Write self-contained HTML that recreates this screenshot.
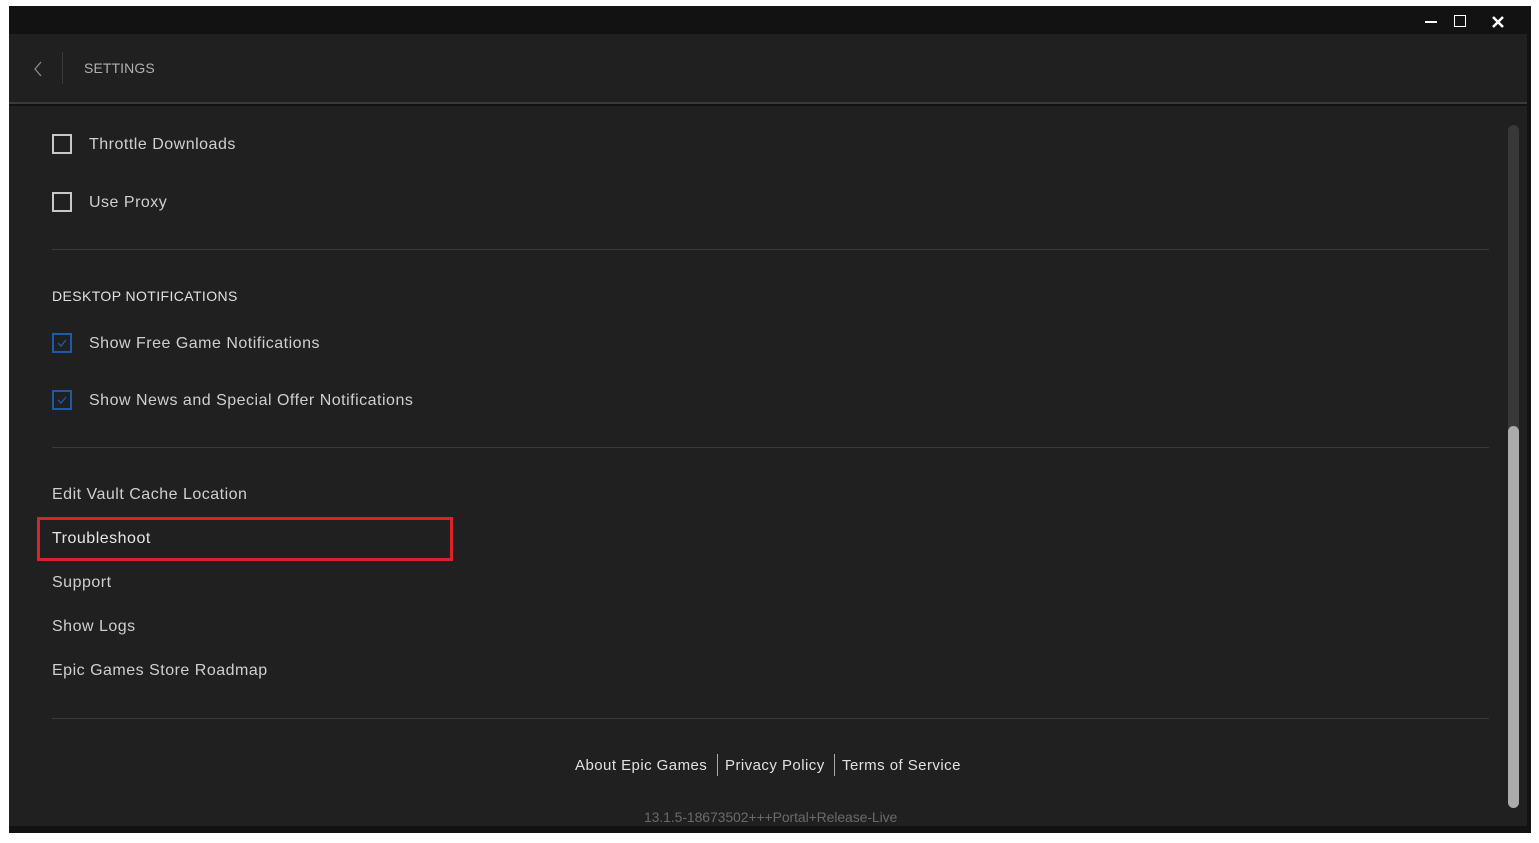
<!DOCTYPE html>
<html><head><meta charset="utf-8"><style>
*{margin:0;padding:0;box-sizing:border-box}
body{width:1539px;height:843px;background:#fff;position:relative;overflow:hidden;font-family:"Liberation Sans",sans-serif}
.win{position:absolute;left:9px;top:6px;width:1522px;height:827px;background:#121212}
.hdr{position:absolute;left:9px;top:34px;width:1518px;height:70px;background:#202020;border-bottom:2px solid #3a3a3a}
.content{position:absolute;left:9px;top:106px;width:1518px;height:720px;background:#202020}
.t{position:absolute;color:#cfcfcf;font-size:16px;white-space:nowrap;letter-spacing:0.5px}
.cb{position:absolute;width:20px;height:20px;border:2px solid #c8c8c8}
.cbb{position:absolute;width:20px;height:20px;border:2px solid #1e5aa8}
.hr{position:absolute;left:52px;width:1437px;height:1px;background:#3a3a3a}
.f{font-size:15px;color:#e0e0e0;letter-spacing:0.45px}
</style></head><body>
<div class="win"></div>
<div class="hdr"></div>
<div class="content"></div>
<div style="position:absolute;left:1425px;top:21px;width:12px;height:2px;background:#fff"></div>
<div style="position:absolute;left:1454px;top:15px;width:12px;height:12px;border:1.5px solid #fff"></div>
<svg style="position:absolute;left:1491px;top:15px" width="14" height="14"><path d="M2 2L12 12M12 2L2 12" stroke="#fff" stroke-width="2.5"/></svg>
<svg style="position:absolute;left:33px;top:61px" width="10" height="16"><path d="M8 1L2 8L8 15" stroke="#8a8a8a" stroke-width="1.3" fill="none"/></svg>
<div style="position:absolute;left:62px;top:52px;width:1px;height:32px;background:#3a3a3a"></div>
<div class="t" style="left:84px;top:60px;font-size:14px;color:#b0b0b0;letter-spacing:0.1px">SETTINGS</div>
<div class="cb" style="left:52px;top:134px"></div>
<div class="t" style="left:89px;top:136px">Throttle Downloads</div>
<div class="cb" style="left:52px;top:192px"></div>
<div class="t" style="left:89px;top:194px">Use Proxy</div>
<div class="hr" style="top:249px"></div>
<div class="t" style="left:52px;top:288px;font-size:14px;color:#e0e0e0;letter-spacing:0.4px">DESKTOP NOTIFICATIONS</div>
<div class="cbb" style="left:52px;top:333px"><svg width="16" height="16" style="position:absolute;left:0;top:0"><path d="M4 8L7 11L12 5" stroke="#1e5aa8" stroke-width="1.3" fill="none"/></svg></div>
<div class="t" style="left:89px;top:335px">Show Free Game Notifications</div>
<div class="cbb" style="left:52px;top:390px"><svg width="16" height="16" style="position:absolute;left:0;top:0"><path d="M4 8L7 11L12 5" stroke="#1e5aa8" stroke-width="1.3" fill="none"/></svg></div>
<div class="t" style="left:89px;top:392px">Show News and Special Offer Notifications</div>
<div class="hr" style="top:447px"></div>
<div class="t" style="left:52px;top:486px">Edit Vault Cache Location</div>
<div style="position:absolute;left:37px;top:517px;width:416px;height:44px;border:3px solid #d9222a"></div>
<div class="t" style="left:52px;top:530px;color:#e6e6e6">Troubleshoot</div>
<div class="t" style="left:52px;top:574px">Support</div>
<div class="t" style="left:52px;top:618px">Show Logs</div>
<div class="t" style="left:52px;top:662px">Epic Games Store Roadmap</div>
<div class="hr" style="top:718px"></div>
<div class="t f" style="left:575px;top:757px">About Epic Games</div>
<div style="position:absolute;left:717px;top:754px;width:1px;height:22px;background:#aaa"></div>
<div class="t f" style="left:725px;top:757px">Privacy Policy</div>
<div style="position:absolute;left:834px;top:754px;width:1px;height:22px;background:#aaa"></div>
<div class="t f" style="left:842px;top:757px">Terms of Service</div>
<div class="t" style="left:644px;top:809px;font-size:14px;color:#6a6a6a;letter-spacing:-0.1px">13.1.5-18673502+++Portal+Release-Live</div>
<div style="position:absolute;left:1508px;top:125px;width:11px;height:683px;background:#383838;border-radius:6px"></div>
<div style="position:absolute;left:1508px;top:426px;width:11px;height:382px;background:#ababab;border-radius:6px"></div>
</body></html>
